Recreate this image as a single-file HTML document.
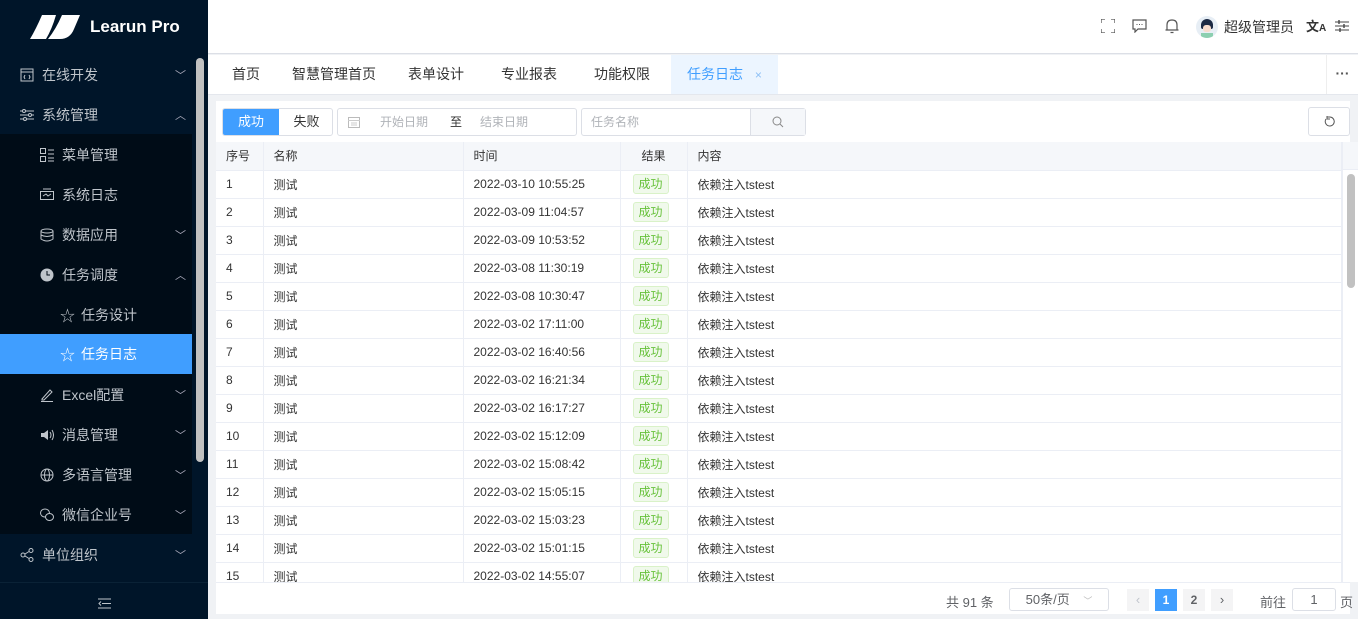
<!DOCTYPE html>
<html><head><meta charset="utf-8"><style>
*{box-sizing:border-box;margin:0;padding:0}
body{width:1358px;height:619px;overflow:hidden;font-family:"Liberation Sans","Noto Sans CJK SC",sans-serif;font-size:13px;color:#333;background:#f0f2f5;position:relative}
.side{position:absolute;left:0;top:0;width:208px;height:619px;background:#001529;color:#c0c6cc}
.logo{height:54px;display:flex;align-items:center;padding-left:30px;color:#fff;font-size:17px;font-weight:bold}
.mi{position:absolute;left:0;width:192px;height:40px;display:flex;align-items:center;font-size:14px;color:#bfc5cb}
.mi svg{margin-right:8px}
.chev{position:absolute;right:6px;top:12px;font-size:11px;color:#aab}
.sub{position:absolute;left:0;top:134px;width:192px;height:400px;background:#000c17}
.sb{position:absolute;left:196px;top:58px;width:8px;height:404px;background:#c1c1c1;border-radius:4px}
.hdr{position:absolute;left:208px;top:0;right:0;height:54px;background:#fff;border-bottom:1px solid #dcdfe6}
.tabs{position:absolute;left:208px;top:55px;right:0;height:39px;background:#fff;font-size:14px}
.tab{position:absolute;top:0;height:39px;line-height:39px;color:#333}
.panel{position:absolute;left:216px;top:101px;width:1134px;height:513px;background:#fff}
.inp{position:absolute;height:28px;border:1px solid #dcdfe6;border-radius:3px;background:#fff;font-size:12px;color:#b0b3b8;line-height:26px}
table{border-collapse:collapse;position:absolute;left:0;top:41px;width:1126px;font-size:12px}
td,th{height:28px;border-bottom:1px solid #ebeef5;border-right:1px solid #ebeef5;text-align:left;padding-left:10px;font-weight:normal;color:#333;white-space:nowrap}
th{background:#f5f7fa;color:#333;font-size:12px}
.tag{display:inline-block;border:1px solid #d9f2c8;background:#f0f9eb;color:#67c23a;font-size:12px;height:20px;line-height:18px;padding:0 5px;border-radius:3px;margin-left:6px}
</style></head><body>
<div class="side">
 <div class="logo"><svg width="50" height="24" viewBox="0 0 50 24"><path d="M12 0H26Q22 14 16 24H0Q6 14 12 0Z M32 0H50L44 14Q40 24 30 24H18Q26 14 32 0Z" fill="#fff"/></svg><span style="margin-left:10px">Learun Pro</span></div>
 <div class="mi" style="top:55px;padding-left:20px"><svg width="14" height="14"><rect x="1" y="1" width="12" height="12" fill="none" stroke="#bfc5cb"/><path d="M1 4H13M5 7L4 9L5 11M9 7L10 9L9 11" stroke="#bfc5cb" fill="none"/></svg>在线开发<span class="chev">﹀</span></div>
 <div class="mi" style="top:95px;padding-left:20px"><svg width="14" height="14"><path d="M0 3H14M0 7H14M0 11H14" stroke="#bfc5cb"/><circle cx="4" cy="3" r="1.5" fill="#001529" stroke="#bfc5cb"/><circle cx="10" cy="7" r="1.5" fill="#001529" stroke="#bfc5cb"/><circle cx="5" cy="11" r="1.5" fill="#001529" stroke="#bfc5cb"/></svg>系统管理<span class="chev">︿</span></div>
 <div class="sub"></div>
 <div class="mi" style="top:135px;padding-left:40px"><svg width="14" height="14"><rect x="0.5" y="0.5" width="5" height="5" fill="none" stroke="#bfc5cb"/><rect x="0.5" y="8.5" width="5" height="5" fill="none" stroke="#bfc5cb"/><path d="M8 2H14M8 6H14M8 10H14M8 13H14" stroke="#bfc5cb"/></svg>菜单管理</div>
 <div class="mi" style="top:175px;padding-left:40px"><svg width="14" height="14"><rect x="0.5" y="3.5" width="13" height="8" fill="none" stroke="#bfc5cb"/><path d="M3 1H11M3 8L6 6L8 8L11 6" stroke="#bfc5cb" fill="none"/></svg>系统日志</div>
 <div class="mi" style="top:215px;padding-left:40px"><svg width="14" height="14"><ellipse cx="7" cy="3" rx="6" ry="2" fill="none" stroke="#bfc5cb"/><path d="M1 3V11Q7 15 13 11V3M1 7Q7 10 13 7" fill="none" stroke="#bfc5cb"/></svg>数据应用<span class="chev">﹀</span></div>
 <div class="mi" style="top:255px;padding-left:40px"><svg width="14" height="14"><circle cx="7" cy="7" r="6.5" fill="#bfc5cb"/><path d="M7 3V7H10" stroke="#000c17" fill="none"/></svg>任务调度<span class="chev">︿</span></div>
 <div class="mi" style="top:295px;padding-left:60px"><span style="margin-right:6px;font-size:15px">☆</span>任务设计</div>
 <div class="mi" style="top:334px;padding-left:60px;background:#409eff;color:#fff"><span style="margin-right:6px;font-size:15px">☆</span>任务日志</div>
 <div class="mi" style="top:375px;padding-left:40px"><svg width="14" height="14"><path d="M2 11L10 2L12 4L4 12H2ZM1 13.5H13" stroke="#bfc5cb" fill="none"/></svg>Excel配置<span class="chev">﹀</span></div>
 <div class="mi" style="top:415px;padding-left:40px"><svg width="14" height="14"><path d="M1 5H4L8 2V12L4 9H1Z" fill="#bfc5cb"/><path d="M10 4Q12 7 10 10M12 2Q15 7 12 12" stroke="#bfc5cb" fill="none"/></svg>消息管理<span class="chev">﹀</span></div>
 <div class="mi" style="top:455px;padding-left:40px"><svg width="14" height="14"><circle cx="7" cy="7" r="6" fill="none" stroke="#bfc5cb"/><ellipse cx="7" cy="7" rx="2.5" ry="6" fill="none" stroke="#bfc5cb"/><path d="M1 7H13" stroke="#bfc5cb"/></svg>多语言管理<span class="chev">﹀</span></div>
 <div class="mi" style="top:495px;padding-left:40px"><svg width="14" height="14"><ellipse cx="5" cy="5" rx="4.5" ry="4" fill="none" stroke="#bfc5cb"/><ellipse cx="9.5" cy="9" rx="4" ry="3.5" fill="#000c17" stroke="#bfc5cb"/></svg>微信企业号<span class="chev">﹀</span></div>
 <div class="mi" style="top:535px;padding-left:20px"><svg width="14" height="14"><circle cx="11" cy="2.5" r="2" fill="none" stroke="#bfc5cb"/><circle cx="3" cy="7" r="2" fill="none" stroke="#bfc5cb"/><circle cx="11" cy="11.5" r="2" fill="none" stroke="#bfc5cb"/><path d="M5 6L9 3.5M5 8L9 10.5" stroke="#bfc5cb"/></svg>单位组织<span class="chev">﹀</span></div>
 <div style="position:absolute;top:582px;left:0;width:208px;border-top:1px solid #0a2236"></div>
 <svg style="position:absolute;left:98px;top:598px" width="13" height="11"><path d="M0 1H13M4 5.5H13M0 10H13M3 3.5L1 5.5L3 7.5" stroke="#bfc5cb" fill="none"/></svg>
 <div class="sb"></div>
</div>
<div class="hdr">
 <svg style="position:absolute;left:893px;top:19px" width="14" height="14"><path d="M0 4V0H4M10 0H14V4M14 10V14H10M4 14H0V10" stroke="#555" fill="none" stroke-width="1.3"/></svg>
 <svg style="position:absolute;left:924px;top:19px" width="15" height="14"><path d="M1 1H14V10H6L3 13V10H1Z" stroke="#555" fill="none" stroke-width="1.2"/><path d="M4.5 5.5h1M7 5.5h1M9.5 5.5h1" stroke="#555"/></svg>
 <svg style="position:absolute;left:957px;top:18px" width="14" height="16"><path d="M2 12V7Q2 2 7 2Q12 2 12 7V12ZM0.5 12H13.5M5.5 14.5H8.5" stroke="#555" fill="none" stroke-width="1.2"/></svg>
 <div style="position:absolute;left:988px;top:16px;width:22px;height:22px;border-radius:50%;background:#e7eef5;overflow:hidden"><div style="position:absolute;left:5px;top:3px;width:12px;height:10px;border-radius:6px 6px 2px 2px;background:#1c2a44"></div><div style="position:absolute;left:7px;top:9px;width:8px;height:7px;border-radius:3px;background:#f7dccd"></div><div style="position:absolute;left:5px;top:17px;width:12px;height:6px;background:#8ccfb0"></div></div>
 <div style="position:absolute;left:1016px;top:17px;font-size:14px;color:#333">超级管理员</div>
 <div style="position:absolute;left:1098px;top:16px;font-size:13px;color:#333;font-weight:bold">文<span style="font-size:10px">A</span></div>
 <svg style="position:absolute;left:1127px;top:19px" width="14" height="14"><path d="M0 3H14M0 7H14M0 11H14" stroke="#444"/><path d="M4 1V5M9 5V9M5 9V13" stroke="#444" stroke-width="1.4"/></svg>
</div>
<div class="tabs">
 <div class="tab" style="left:24px">首页</div>
 <div class="tab" style="left:84px">智慧管理首页</div>
 <div class="tab" style="left:200px">表单设计</div>
 <div class="tab" style="left:293px">专业报表</div>
 <div class="tab" style="left:386px">功能权限</div>
 <div class="tab" style="left:463px;width:107px;background:#ecf5ff;color:#409eff;padding-left:16px">任务日志 <span style="font-size:12px;margin-left:8px;color:#8cbff5">×</span></div>
 <div style="position:absolute;left:1118px;top:0;height:39px;border-left:1px solid #eee;width:32px;text-align:center;line-height:36px;color:#555;font-weight:bold">···</div>
</div>
<div style="position:absolute;left:208px;top:94px;right:0;height:1px;background:#e4e7ed"></div>
<div class="panel">
 <div style="position:absolute;left:6px;top:7px;width:111px;height:28px;border:1px solid #dcdfe6;border-radius:3px;overflow:hidden;font-size:13px">
  <div style="position:absolute;left:0;top:0;width:56px;height:28px;background:#409eff;color:#fff;text-align:center;line-height:26px">成功</div>
  <div style="position:absolute;left:56px;top:0;width:55px;text-align:center;line-height:26px;color:#333">失败</div>
 </div>
 <div class="inp" style="left:121px;top:7px;width:240px"><svg style="position:absolute;left:10px;top:7px" width="12" height="12"><rect x="0.5" y="1.5" width="11" height="10" fill="none" stroke="#bbb"/><path d="M0 4.5H12M3 7H9M3 9H9" stroke="#ccc"/></svg><span style="position:absolute;left:42px">开始日期</span><span style="position:absolute;left:112px;color:#333">至</span><span style="position:absolute;left:142px">结束日期</span></div>
 <div class="inp" style="left:365px;top:7px;width:225px;padding-left:9px">任务名称<div style="position:absolute;right:0;top:0;width:55px;height:26px;background:#f5f7fa;border-left:1px solid #dcdfe6"><svg style="position:absolute;left:21px;top:7px" width="12" height="12"><circle cx="5" cy="5" r="4" fill="none" stroke="#888"/><path d="M8 8L11 11" stroke="#888"/></svg></div></div>
 <div class="inp" style="left:1092px;top:6px;width:42px;height:29px"><svg style="position:absolute;left:15px;top:8px" width="11" height="11"><path d="M2 3A4.5 4.5 0 1 0 5.5 1H3" stroke="#555" fill="none"/><path d="M3 0V3H6" stroke="#555" fill="none"/></svg></div>
 <table>
  <tr><th style="width:47px">序号</th><th style="width:200px">名称</th><th style="width:157px">时间</th><th style="width:67px;text-align:center;padding:0">结果</th><th>内容</th></tr>
  <tr><td>1</td><td>测试</td><td>2022-03-10 10:55:25</td><td style="padding:0 0 0 12px"><span class="tag" style="margin:0">成功</span></td><td>依赖注入tstest</td></tr>
  <tr><td>2</td><td>测试</td><td>2022-03-09 11:04:57</td><td style="padding:0 0 0 12px"><span class="tag" style="margin:0">成功</span></td><td>依赖注入tstest</td></tr>
  <tr><td>3</td><td>测试</td><td>2022-03-09 10:53:52</td><td style="padding:0 0 0 12px"><span class="tag" style="margin:0">成功</span></td><td>依赖注入tstest</td></tr>
  <tr><td>4</td><td>测试</td><td>2022-03-08 11:30:19</td><td style="padding:0 0 0 12px"><span class="tag" style="margin:0">成功</span></td><td>依赖注入tstest</td></tr>
  <tr><td>5</td><td>测试</td><td>2022-03-08 10:30:47</td><td style="padding:0 0 0 12px"><span class="tag" style="margin:0">成功</span></td><td>依赖注入tstest</td></tr>
  <tr><td>6</td><td>测试</td><td>2022-03-02 17:11:00</td><td style="padding:0 0 0 12px"><span class="tag" style="margin:0">成功</span></td><td>依赖注入tstest</td></tr>
  <tr><td>7</td><td>测试</td><td>2022-03-02 16:40:56</td><td style="padding:0 0 0 12px"><span class="tag" style="margin:0">成功</span></td><td>依赖注入tstest</td></tr>
  <tr><td>8</td><td>测试</td><td>2022-03-02 16:21:34</td><td style="padding:0 0 0 12px"><span class="tag" style="margin:0">成功</span></td><td>依赖注入tstest</td></tr>
  <tr><td>9</td><td>测试</td><td>2022-03-02 16:17:27</td><td style="padding:0 0 0 12px"><span class="tag" style="margin:0">成功</span></td><td>依赖注入tstest</td></tr>
  <tr><td>10</td><td>测试</td><td>2022-03-02 15:12:09</td><td style="padding:0 0 0 12px"><span class="tag" style="margin:0">成功</span></td><td>依赖注入tstest</td></tr>
  <tr><td>11</td><td>测试</td><td>2022-03-02 15:08:42</td><td style="padding:0 0 0 12px"><span class="tag" style="margin:0">成功</span></td><td>依赖注入tstest</td></tr>
  <tr><td>12</td><td>测试</td><td>2022-03-02 15:05:15</td><td style="padding:0 0 0 12px"><span class="tag" style="margin:0">成功</span></td><td>依赖注入tstest</td></tr>
  <tr><td>13</td><td>测试</td><td>2022-03-02 15:03:23</td><td style="padding:0 0 0 12px"><span class="tag" style="margin:0">成功</span></td><td>依赖注入tstest</td></tr>
  <tr><td>14</td><td>测试</td><td>2022-03-02 15:01:15</td><td style="padding:0 0 0 12px"><span class="tag" style="margin:0">成功</span></td><td>依赖注入tstest</td></tr>
  <tr><td>15</td><td>测试</td><td>2022-03-02 14:55:07</td><td style="padding:0 0 0 12px"><span class="tag" style="margin:0">成功</span></td><td>依赖注入tstest</td></tr>
 </table>
 <div style="position:absolute;left:1126px;top:41px;width:16px;height:440px;background:#fff;border-left:1px solid #ebeef5"><div style="height:28px;background:#f5f7fa;border-bottom:1px solid #ebeef5"></div><div style="position:absolute;left:4px;top:32px;width:8px;height:114px;background:#c1c1c1;border-radius:4px"></div></div>
 <div style="position:absolute;left:0;top:481px;width:1134px;height:32px;background:#fff;border-top:1px solid #ebeef5;font-size:13px;color:#606266">
  <span style="position:absolute;left:730px;top:9px">共 91 条</span>
  <div style="position:absolute;left:793px;top:5px;width:100px;height:23px;border:1px solid #dcdfe6;border-radius:3px;text-align:center;line-height:21px">50条/页 <span style="font-size:9px;color:#bbb;margin-left:10px">﹀</span></div>
  <div style="position:absolute;left:911px;top:6px;width:22px;height:22px;background:#f4f4f5;color:#c0c4cc;text-align:center;line-height:22px">‹</div>
  <div style="position:absolute;left:939px;top:6px;width:22px;height:22px;background:#409eff;color:#fff;text-align:center;line-height:22px;font-weight:bold;font-size:12px">1</div>
  <div style="position:absolute;left:967px;top:6px;width:22px;height:22px;background:#f4f4f5;color:#606266;text-align:center;line-height:22px;font-weight:bold;font-size:12px">2</div>
  <div style="position:absolute;left:995px;top:6px;width:22px;height:22px;background:#f4f4f5;color:#606266;text-align:center;line-height:22px">›</div>
  <span style="position:absolute;left:1044px;top:9px">前往</span>
  <div style="position:absolute;left:1076px;top:5px;width:44px;height:23px;border:1px solid #dcdfe6;border-radius:3px;text-align:center;line-height:21px">1</div>
  <span style="position:absolute;left:1124px;top:9px">页</span>
 </div>
</div>
</body></html>
